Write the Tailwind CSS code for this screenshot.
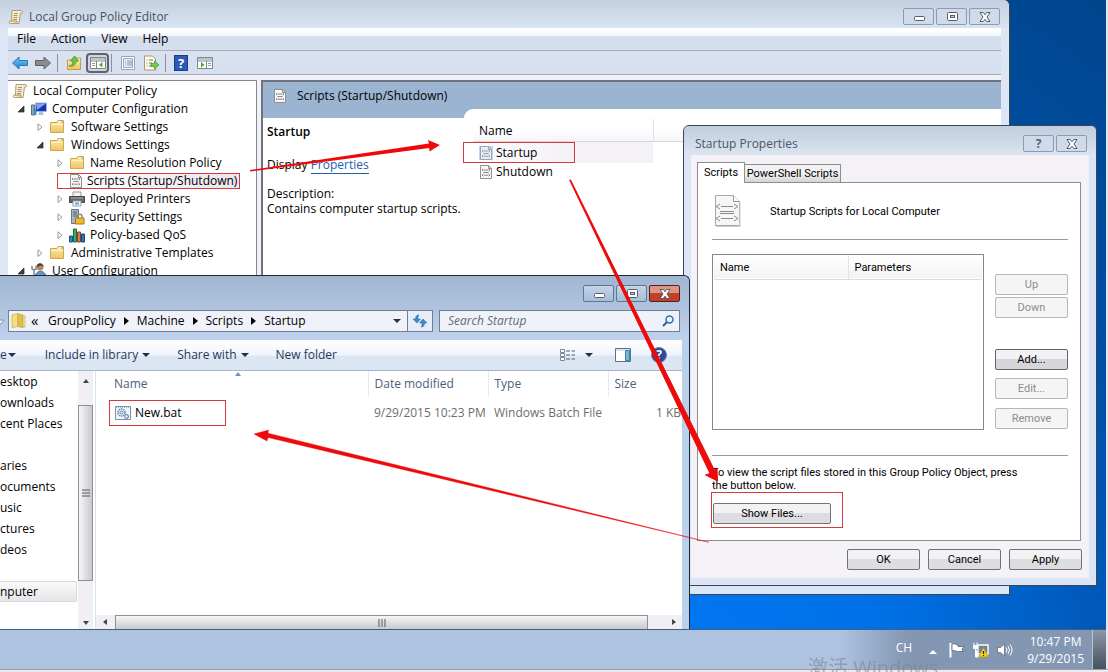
<!DOCTYPE html>
<html lang="en">
<head>
<meta charset="utf-8">
<title>Local Group Policy Editor</title>
<script src="https://cdn.jsdelivr.net/npm/@tailwindcss/browser@4"></script>
</head>
<body class="h-screen overflow-hidden flex flex-col bg-[#e6e6ea] font-['Open_Sans','Noto_Sans',sans-serif] text-[12px] leading-[18px] text-black">

<svg class="absolute w-0 h-0" aria-hidden="true">
  <defs>
    <linearGradient id="gf" x1="0" y1="0" x2="0" y2="1"><stop offset="0" stop-color="#fdebaa"/><stop offset="1" stop-color="#edc566"/></linearGradient>
    <linearGradient id="gb" x1="0" y1="0" x2="0" y2="1"><stop offset="0" stop-color="#7cc8f5"/><stop offset="1" stop-color="#1a80cc"/></linearGradient>
  </defs>
  <symbol id="scroll" viewBox="0 0 16 16">
    <path d="M4 1.500h9.500c1.600 0 1.600 2.500 0 2.500H12.500L11 14.500H2.500C.8 14.500 .8 12 2.500 12H3.500z" fill="#f6ecd2" stroke="#b59a6a"/>
    <path d="M6 4.500h4M5.500 6.500h4M5.500 8.500h4M5 10.500h4" stroke="#a8946c"/><path d="M2.500 12h6.500v2.500" fill="#e2cd9a" stroke="#b59a6a"/>
  </symbol>
  <symbol id="folder" viewBox="0 0 16 16">
    <path d="M1.500 3.500h6.500l1-2h5.500v12h-13z" fill="url(#gf)" stroke="#cfa750"/><path d="M9.500 3h2.500" stroke="#fff"/><path d="M12 3h2" stroke="#6aa7d8"/><path d="M2 5.500h12" stroke="#fff3c8"/>
  </symbol>
  <symbol id="script" viewBox="0 0 14 14">
    <path d="M1.500 .5h8l3 3v10h-11z" fill="#fafafa" stroke="#8f8f8f"/><path d="M9.500 .5v3h3" fill="none" stroke="#8f8f8f"/>
    <path d="M4.500 4L3 5l1.500 1M9.500 4L11 5l-1.500 1M4.500 9L3 10.200l1.500 1M9.500 9l1.500 1.200-1.500 1M5 5h4M4.500 7.500h5M5 10.200h4" fill="none" stroke="#777" stroke-width=".9"/>
  </symbol>
  <symbol id="closed" viewBox="0 0 8 8"><path d="M2 .8L6 4.200 2 7.500z" fill="#fff" stroke="#989898"/></symbol>
  <symbol id="open" viewBox="0 0 8 8"><path d="M7 1v6H1z" fill="#404040" stroke="#222" stroke-width=".7"/></symbol>
  <symbol id="down" viewBox="0 0 8 4"><path d="M0 0h8L4 4z" fill="#1e3250"/></symbol>
  <symbol id="min" viewBox="0 0 12 12"><rect x="1.500" y="5.500" width="10" height="4" rx="1" fill="#fff" stroke="#555c66"/></symbol>
  <symbol id="max" viewBox="0 0 12 12"><rect x="1.500" y="1.500" width="10" height="8" rx="1" fill="#fff" stroke="#555c66"/><rect x="4.500" y="4.500" width="4" height="2" fill="#c8d4e4" stroke="#555c66"/></symbol>
  <symbol id="close" viewBox="0 0 12 12"><path d="M1 1.500h3.200L6 3.800l1.800-2.300H11L8 6l3 4.500H7.800L6 8.200l-1.800 2.300H1L4 6z" fill="#fff" stroke="#555c66"/></symbol>
</svg>

<main class="relative flex-1 min-h-0 overflow-hidden mr-[2px] bg-[radial-gradient(ellipse_at_60%_110%,#0078f4_0%,#0070e6_25%,#0050a8_55%,#004488_90%)]">

  <!-- Policy editor -->
  <section class="absolute left-0 top-0 w-[1010px] h-[595px] flex flex-col rounded-tr-md border-r border-b border-[#3a4656] bg-[#dce6f5] pb-2 pl-2 pr-2">
    <header class="h-7 shrink-0 -mx-2 pl-2 pr-[9px] rounded-tr-md flex items-center bg-linear-to-b from-[#c4d0e0] to-[#dae4f2]">
      <svg class="w-4 h-4 mt-[5px]"><use href="#scroll"/></svg>
      <h1 class="ml-[5px] mt-[5px] flex-1 text-[#46525f]">Local Group Policy Editor</h1>
      <div class="flex gap-[2px] mt-[5px]">
        <button aria-label="Minimize" class="w-[31px] h-[17px] flex items-center justify-center rounded-xs border border-[#8a9cb4] bg-[#cfdbea]"><svg class="w-3 h-3"><use href="#min"/></svg></button>
        <button aria-label="Maximize" class="w-[31px] h-[17px] flex items-center justify-center rounded-xs border border-[#8a9cb4] bg-[#cfdbea]"><svg class="w-3 h-3"><use href="#max"/></svg></button>
        <button aria-label="Close" class="w-[31px] h-[17px] flex items-center justify-center rounded-xs border border-[#8a9cb4] bg-[#cfdbea]"><svg class="w-3 h-3"><use href="#close"/></svg></button>
      </div>
    </header>
    <nav class="h-[23px] shrink-0 flex items-center gap-[15px] pl-[9px] border-b border-[#a9adb8] bg-linear-to-b from-white from-10% via-[#f1f3fa] via-35% to-[#d5deee] to-40%">
      <button>File</button><button>Action</button><button>View</button><button>Help</button>
    </nav>
    <div class="h-[24px] shrink-0 flex items-center pl-1 border-b border-[#a9adb8] bg-linear-to-b from-[#dae2f1] to-[#d6dff0]">
      <button aria-label="Back"><svg class="w-4 h-4" viewBox="0 0 16 16"><path d="M.5 8L7 2v3.500h8.500v5H7V14z" fill="url(#gb)" stroke="#2a7ab8"/></svg></button>
      <button aria-label="Forward" class="ml-[7px]"><svg class="w-4 h-4" viewBox="0 0 16 16"><path d="M15.500 8L9 2v3.500H.5v5H9V14z" fill="#8c8c8c" stroke="#606060"/></svg></button>
      <span class="w-px h-[18px] ml-[6px] bg-[#8a919c]"></span>
      <button aria-label="Up one level" class="ml-2"><svg class="w-4 h-4" viewBox="0 0 16 16"><path d="M1.500 5h6l1-2h6v11.500h-13z" fill="url(#gf)" stroke="#c79c45"/><path d="M3 11c3 0 4-3 4-5H4.500L8.500 1l4 5H10c0 4-3 6-7 5z" fill="#6cc54a" stroke="#3d8b28" stroke-width=".7"/></svg></button>
      <button aria-label="Show console tree" class="ml-1 w-[23px] h-5 flex items-center justify-center rounded-sm border-2 border-[#5b6470] bg-[#d0d5de]"><svg class="w-4 h-4 shrink-0" viewBox="0 0 16 16"><path d="M.5 2.500h15v11H.5z" fill="#fff" stroke="#7d8794"/><path d="M1 4h14M1 6h14M6.500 6v7" stroke="#7d8794"/><path d="M2 8.500h3M2 10.500h3" stroke="#999"/><path d="M12.500 7v5.500L9 9.800z" fill="#3fae2a"/></svg></button>
      <span class="w-px h-[18px] ml-[2px] bg-[#8a919c]"></span>
      <button aria-label="Properties" class="ml-2"><svg class="w-4 h-4" viewBox="0 0 16 16"><path d="M1.500 1.500h13v13h-13z" fill="#fff" stroke="#98a2b0"/><path d="M3.500 3.500h9v9h-9z" fill="#eef3fa" stroke="#8fa5c2"/><path d="M5 6h1M7 6h5M5 8h1M7 8h5M5 10h1M7 10h5" stroke="#7a8ca8"/></svg></button>
      <button aria-label="Export list" class="ml-[7px]"><svg class="w-4 h-4" viewBox="0 0 16 16"><path d="M1.500 1h8l3 3v11h-11z" fill="#fffbe8" stroke="#a59a78"/><path d="M3.500 5h1M6 5h4M3.500 8h1M6 8h3M3.500 11h1M6 11h3" stroke="#777"/><path d="M8 8.500h3.500V6L16 10l-4.500 4v-2.500H8z" fill="#6fd04c" stroke="#3d962a" stroke-width=".7"/></svg></button>
      <span class="w-px h-[18px] ml-[6px] bg-[#8a919c]"></span>
      <button aria-label="Help topics" class="ml-2 w-[14px] h-4 border border-[#1d3c86] bg-[#2c58b8] text-white text-[13px] leading-[14px] font-bold">?</button>
      <button aria-label="Show action pane" class="ml-[9px]"><svg class="w-4 h-4" viewBox="0 0 16 16"><path d="M.5 2.500h15v11H.5z" fill="#fff" stroke="#7d8794"/><path d="M1 4h14M1 6h14M9.500 6v7" stroke="#7d8794"/><path d="M11 8.500h3M11 10.500h3" stroke="#999"/><path d="M4 7v5.500l3.500-2.700z" fill="#3fae2a"/></svg></button>
    </div>
    <div class="flex-1 min-h-0 flex gap-1 pt-[5px] bg-[#f3f1f8]">
      <ul class="w-[249px] shrink-0 overflow-hidden border-t border-r border-[#828790] bg-white pt-px">
        <li class="flex items-center h-[18px] pl-1"><svg class="w-4 h-4 mr-[5px]"><use href="#scroll"/></svg>Local Computer Policy</li>
        <li class="flex items-center h-[18px] pl-[9px]"><svg class="w-2 h-2 mr-[6px]"><use href="#open"/></svg><svg class="w-4 h-4 mr-[5px]" viewBox="0 0 16 16"><path d="M4.500 2h11v8.500h-11z" fill="#1832c0" stroke="#a9b4cc"/><path d="M5 2.500h10L6 9z" fill="#7da4ee"/><path d="M8 11h4l1 3H7z" fill="#b9c2d0"/><path d="M.5 4h3v10h-3z" fill="#98a5b5" stroke="#5c6c80"/><path d="M2.500 8h3v6h-3z" fill="#3b8bc6"/></svg>Computer Configuration</li>
        <li class="flex items-center h-[18px] pl-7"><svg class="w-2 h-2 mr-[5px]"><use href="#closed"/></svg><svg class="w-4 h-4 mr-[6px]"><use href="#folder"/></svg>Software Settings</li>
        <li class="flex items-center h-[18px] pl-7"><svg class="w-2 h-2 mr-[5px]"><use href="#open"/></svg><svg class="w-4 h-4 mr-[6px]"><use href="#folder"/></svg>Windows Settings</li>
        <li class="flex items-center h-[18px] pl-12"><svg class="w-2 h-2 mr-[5px]"><use href="#closed"/></svg><svg class="w-4 h-4 mr-[5px]"><use href="#folder"/></svg>Name Resolution Policy</li>
        <li class="flex items-center h-[18px] ml-[49px] mr-[16px]"><span class="flex items-center w-full h-4 pl-[11px] border border-[#d83a3a] bg-linear-to-r from-white to-[#e9e6ee]"><svg class="w-[14px] h-[14px] shrink-0 mr-1"><use href="#script"/></svg><span class="whitespace-nowrap">Scripts (Startup/Shutdown)</span></span></li>
        <li class="flex items-center h-[18px] pl-12"><svg class="w-2 h-2 mr-[5px]"><use href="#closed"/></svg><svg class="w-4 h-4 mr-[5px]" viewBox="0 0 16 16"><path d="M4 1h8v5H4z" fill="#f4f4f4" stroke="#999"/><path d="M.5 5.500h15v6H.5z" fill="#66686e" stroke="#44464c"/><path d="M2 7h12" stroke="#aaa"/><path d="M4 10h8v5H4z" fill="#fff" stroke="#999"/><path d="M6 12.500h4" stroke="#4ba3e0" stroke-width="2"/></svg>Deployed Printers</li>
        <li class="flex items-center h-[18px] pl-12"><svg class="w-2 h-2 mr-[5px]"><use href="#closed"/></svg><svg class="w-4 h-4 mr-[5px]" viewBox="0 0 16 16"><path d="M2.500 .5h7v14h-7z" fill="#aab6c4" stroke="#6b7785"/><path d="M4 3h4M4 5h4M4 7h4" stroke="#51606f"/><path d="M8.500 9V7.500c0-3 4.500-3 4.500 0V9" fill="none" stroke="#8c8c8c" stroke-width="1.500"/><path d="M6.500 9h8.500v6H6.500z" fill="#f1b92c" stroke="#a87712"/></svg>Security Settings</li>
        <li class="flex items-center h-[18px] pl-12"><svg class="w-2 h-2 mr-[5px]"><use href="#closed"/></svg><svg class="w-4 h-4 mr-[5px]" viewBox="0 0 16 16"><path d="M.5 9h3v6h-3z" fill="#2b88c8" stroke="#14507c"/><path d="M4.500 2h3v13h-3z" fill="#3caa6c" stroke="#1a6e42"/><path d="M8.500 5h3v10h-3z" fill="#d87a4c" stroke="#8d4220"/><path d="M12.500 7h3v8h-3z" fill="#2b78c8" stroke="#14407c"/></svg>Policy-based QoS</li>
        <li class="flex items-center h-[18px] pl-7"><svg class="w-2 h-2 mr-[5px]"><use href="#closed"/></svg><svg class="w-4 h-4 mr-[6px]"><use href="#folder"/></svg>Administrative Templates</li>
        <li class="flex items-center h-[18px] pl-[9px]"><svg class="w-2 h-2 mr-[6px]"><use href="#open"/></svg><svg class="w-4 h-4 mr-[5px]" viewBox="0 0 16 16"><circle cx="9" cy="4" r="3.500" fill="#b98a62"/><path d="M5.500 4c0-5 7-5 7 0l-2-1.500z" fill="#5a4030"/><path d="M4 15c0-9 11-9 11 0z" fill="#6a94c4" stroke="#3e6694"/><path d="M1 3v3l2 1 2-1V3M3 7v8" fill="none" stroke="#7a8898" stroke-width="1.500"/></svg>User Configuration</li>
      </ul>
      <div class="flex-1 flex flex-col border-t-2 border-l-2 border-[#6f747c] bg-white">
        <div class="h-9 shrink-0 flex bg-[#9bb4d1]">
          <h2 class="w-[201px] flex items-center pl-[10px] pb-2"><svg class="w-[14px] h-[14px] mr-[10px]"><use href="#script"/></svg><span class="whitespace-nowrap">Scripts (Startup/Shutdown)</span></h2>
          <span class="flex-1 self-end h-[9px] rounded-tl-[9px] bg-white"></span>
        </div>
        <div class="flex-1 flex pt-px">
          <div class="w-[200px] pl-1 pt-1">
            <h3 class="font-semibold">Startup</h3>
            <p class="mt-[15px]">Display <a href="#" class="text-[#1a5fa8] border-b border-[#1a5fa8]">Properties</a></p>
            <p class="mt-3 leading-[15px] whitespace-nowrap">Description:<br>Contains computer startup scripts.</p>
          </div>
          <div class="flex-1">
            <div class="flex h-[23px] ml-[10px] border-b border-[#d5d5dc] bg-linear-to-b from-white from-50% to-[#f5f4f8]">
              <span class="w-[181px] pl-[6px] pt-[3px] border-r border-[#e0e0e6]">Name</span>
            </div>
            <div class="flex w-[190px] bg-[#f5f2f7]"><button class="w-[112px] h-[21px] flex items-center pl-[15px] border border-[#d83a3a] bg-linear-to-r from-white to-[#f3f0f6]"><svg class="w-[14px] h-[14px] mr-[3px] bg-[#bcd8f4]"><use href="#script" opacity=".7"/></svg>Startup</button></div>
            <button class="flex items-center h-[18px] pl-4"><svg class="w-[14px] h-[14px] mr-[3px]"><use href="#script"/></svg>Shutdown</button>
          </div>
        </div>
      </div>
    </div>
  </section>

  <!-- Startup Properties dialog -->
  <section class="absolute left-[683px] top-[125px] w-[414px] h-[461px] flex flex-col rounded-t-md border border-[#3a4656] bg-[#dbe5f5] px-[7px] pb-[7px] font-['Roboto','Liberation_Sans',sans-serif] text-[11px] leading-[13px]">
    <header class="h-[29px] shrink-0 -mx-[7px] rounded-t-md flex items-center pl-[11px] pr-[9px] bg-linear-to-b from-[#c0cddc] to-[#dbe5f2] font-['Open_Sans',sans-serif] text-[12px]">
      <h2 class="flex-1 mt-[6px] text-[#4b5764]">Startup Properties</h2>
      <div class="flex gap-[2px] mt-[6px]">
        <button aria-label="Help" class="w-[31px] h-[17px] rounded-xs border border-[#8a9cb4] bg-[#cfdbea] font-bold text-[#5a6068] leading-[14px]">?</button>
        <button aria-label="Close" class="w-[31px] h-[17px] flex items-center justify-center rounded-xs border border-[#8a9cb4] bg-[#cfdbea]"><svg class="w-3 h-3"><use href="#close"/></svg></button>
      </div>
    </header>
    <div class="flex-1 flex flex-col bg-[#f5f2f7] pl-[6px] pr-2 pt-[6px] pb-2">
      <div class="flex items-end h-[21px] shrink-0">
        <button class="relative z-10 w-[48px] h-[21px] border border-b-0 border-[#8c8e94] bg-white -mb-px pb-px">Scripts</button>
        <button class="w-[97px] h-[18px] -ml-px border border-b-0 border-[#8c8e94] bg-linear-to-b from-[#f2f2f2] from-50% to-[#d4d4d8] whitespace-nowrap">PowerShell Scripts</button>
      </div>
      <div class="h-[359px] border border-[#8c8e94] bg-white pl-[14px] pr-3">
        <div class="h-[57px] flex items-center border-b border-[#9a9a9a]">
          <svg class="w-[27px] h-8 ml-[2px] mr-[29px]" viewBox="0 0 27 32"><path d="M1.500 .5h18l6 6v24h-24z" fill="#f6f6f6" stroke="#a8a8a8"/><path d="M19.500 .5v6h6" fill="#fff" stroke="#999"/><path d="M2 31.500h24V8" fill="none" stroke="#ccc"/><path d="M6 9l-4 2.500L6 14M20 9l4 2.500-4 2.500M6 21l-4 2.500L6 26M20 21l4 2.500-4 2.500M7 11.500h12M6 16.500h14M6 18.500h14M7 23.500h12" fill="none" stroke="#8a8a8a"/></svg>
          <p>Startup Scripts for Local Computer</p>
        </div>
        <div class="flex h-[216px] pt-[14px] justify-between border-b border-[#9a9a9a]">
          <div class="w-[272px] h-[176px] border border-[#828790] p-px">
            <table class="w-full table-fixed border-collapse"><thead><tr class="h-[23px] bg-linear-to-b from-white to-[#f3f3f5] border-b border-[#dcdce0] text-left"><th class="w-[134px] pl-[6px] font-normal border-r border-[#e2e2e6]">Name</th><th class="pl-[6px] font-normal">Parameters</th></tr></thead><tbody></tbody></table>
          </div>
          <div class="w-[73px] pt-[20px] flex flex-col text-[#8c8c8c]">
            <button disabled class="h-[21px] rounded-xs border border-[#b4b6ba] bg-[#f5f5f5]">Up</button>
            <button disabled class="h-[21px] mt-[2px] rounded-xs border border-[#b4b6ba] bg-[#f5f5f5]">Down</button>
            <button class="h-[21px] mt-[31px] rounded-xs border border-[#5f6266] bg-linear-to-b from-[#f2f1f4] from-50% to-[#d6d5da] to-50% text-black">Add...</button>
            <button disabled class="h-[21px] mt-2 rounded-xs border border-[#b4b6ba] bg-[#f5f5f5]">Edit...</button>
            <button disabled class="h-[21px] mt-[9px] rounded-xs border border-[#b4b6ba] bg-[#f5f5f5]">Remove</button>
          </div>
        </div>
        <p class="mt-[10px] whitespace-nowrap">To view the script files stored in this Group Policy Object, press<br>the button below.</p>
        <div class="w-[132px] h-9 -ml-px border border-[#d83a3a] pt-[10px] pl-px"><button class="block w-[118px] h-[21px] rounded-xs border border-[#707276] bg-linear-to-b from-[#f2f1f4] from-50% to-[#dddce1] to-50%">Show Files...</button></div>
      </div>
      <div class="flex justify-end gap-2 mt-2 -mr-px">
        <button class="w-[73px] h-[21px] rounded-xs border border-[#707276] bg-linear-to-b from-[#f2f1f4] from-50% to-[#dddce1] to-50%">OK</button>
        <button class="w-[73px] h-[21px] rounded-xs border border-[#707276] bg-linear-to-b from-[#f2f1f4] from-50% to-[#dddce1] to-50%">Cancel</button>
        <button class="w-[73px] h-[21px] rounded-xs border border-[#707276] bg-linear-to-b from-[#f2f1f4] from-50% to-[#dddce1] to-50%">Apply</button>
      </div>
    </div>
  </section>

  <!-- Explorer -->
  <section class="absolute left-0 top-[275px] bottom-0 w-[690px] flex flex-col rounded-tr-md border-t border-r border-[#1c2836] bg-[#b9d1ea] pr-[7px]">
    <div class="h-16 shrink-0 -mr-[7px] pr-[9px] rounded-tr-md bg-linear-to-b from-[#a0b6d0] to-[#bed1ed]">
      <div class="flex justify-end gap-[2px] pt-[9px]">
        <button aria-label="Minimize" class="w-[31px] h-[17px] flex items-center justify-center rounded-xs border border-[#5f7591] bg-linear-to-b from-[#c3d4e8] to-[#a7bdd8]"><svg class="w-3 h-3"><use href="#min"/></svg></button>
        <button aria-label="Maximize" class="w-[31px] h-[17px] flex items-center justify-center rounded-xs border border-[#5f7591] bg-linear-to-b from-[#c3d4e8] to-[#a7bdd8]"><svg class="w-3 h-3"><use href="#max"/></svg></button>
        <button aria-label="Close" class="w-[31px] h-[17px] flex items-center justify-center rounded-xs border border-[#5c1c1c] bg-linear-to-b from-[#dc9484] from-50% to-[#c0402a] to-50%"><svg class="w-3 h-3"><use href="#close"/></svg></button>
      </div>
      <div class="flex mt-2 h-[22px]">
        <svg class="w-2 h-4 mt-1" viewBox="0 0 8 16"><path d="M0 6h4L1 10H0" fill="#e8f0fa" stroke="#8098b4"/></svg>
        <div class="flex-1 flex items-center border border-[#6e7f96] bg-[#eff3f9] pl-[2px]">
          <svg class="w-4 h-4" viewBox="0 0 16 16"><path d="M1 2l6-1.500v13L1 14.500z" fill="#f4dd82" stroke="#d8bc60"/><path d="M7 1l5 1v12.500L7 13.500z" fill="#e3bf4c" stroke="#cfae48"/><path d="M12 3h2v11h-2z" fill="#f9edb8" stroke="#c9a640" stroke-width=".7"/></svg>
          <span class="ml-1 w-[17px] text-[15px] pb-[3px]">«</span>
          <button>GroupPolicy</button><svg class="w-[5px] h-2 mx-2" viewBox="0 0 5 8"><path d="M0 0l5 4-5 4z"/></svg>
          <button>Machine</button><svg class="w-[5px] h-2 mx-2" viewBox="0 0 5 8"><path d="M0 0l5 4-5 4z"/></svg>
          <button>Scripts</button><svg class="w-[5px] h-2 mx-2" viewBox="0 0 5 8"><path d="M0 0l5 4-5 4z"/></svg>
          <button>Startup</button>
          <button aria-label="Previous locations" class="ml-auto mr-[6px]"><svg class="w-2 h-1"><use href="#down"/></svg></button>
        </div>
        <button aria-label="Refresh" class="w-[25px] flex items-center justify-center border border-l-0 border-[#6e7f96] bg-[#e6edf7]"><svg class="w-4 h-4" viewBox="0 0 16 16"><path d="M7 2C4 2 3.500 4 3.500 6H1l4 4 3.500-4H6c0-2 0-3 1-4z" fill="#3d8bd0" stroke="#2463a0" stroke-width=".5"/><path d="M9 14c3 0 3.500-2 3.500-4H15l-4-4-3.500 4H10c0 2 0 3-1 4z" fill="#3d8bd0" stroke="#2463a0" stroke-width=".5"/></svg></button>
        <label class="w-[241px] ml-[6px] flex items-center border border-[#6e7f96] bg-[#eff3f9] px-2">
          <input type="text" aria-label="Search" placeholder="Search Startup" class="flex-1 min-w-0 italic outline-none placeholder:text-[#646c76]">
          <svg class="w-3 h-3 -mr-[3px]" viewBox="0 0 12 12"><circle cx="7.500" cy="4.500" r="3.500" fill="#e9f4fe" stroke="#2d6fb8" stroke-width="1.500"/><path d="M5 7L1 11" stroke="#2d5f98" stroke-width="2"/></svg>
        </label>
      </div>
    </div>
    <div class="h-[31px] shrink-0 flex items-center border-b border-[#a6b7cc] bg-linear-to-b from-white from-0% via-[#eff4fb] via-50% to-[#dce6f3] to-55% text-[#1e395b]">
      <button class="flex items-center gap-px">e<svg class="w-2 h-1"><use href="#down"/></svg></button>
      <button class="flex items-center gap-1 ml-[29px]">Include in library<svg class="w-2 h-1"><use href="#down"/></svg></button>
      <button class="flex items-center gap-1 ml-[27px]">Share with<svg class="w-2 h-1"><use href="#down"/></svg></button>
      <button class="ml-[27px]">New folder</button>
      <button aria-label="Change view" class="ml-auto flex items-center gap-[9px]"><svg class="w-4 h-3" viewBox="0 0 16 12"><path d="M.5 .5h4v3h-4zM.5 4.500h4v3h-4zM.5 8.500h4v3h-4z" fill="#fff" stroke="#7b8798"/><path d="M6 2h4M11.500 2H15M6 6h4M11.500 6H15M6 10h4M11.500 10H15" stroke="#4c5f7a"/></svg><svg class="w-2 h-1"><use href="#down"/></svg></button>
      <button aria-label="Preview pane" class="ml-[22px]"><svg class="w-4 h-[14px]" viewBox="0 0 16 14"><path d="M.5 .5h15v13H.5z" fill="#fff" stroke="#5c7089"/><path d="M1 2h14" stroke="#b8c4d4"/><path d="M10.500 2.500h4v10h-4z" fill="#6fb8d8" stroke="#3f82a4"/></svg></button>
      <button aria-label="Get help" class="ml-5 mr-[15px] size-4 rounded-full border border-[#6f7fa8] bg-[#2a4a9c] text-white font-bold leading-[14px]">?</button>
    </div>
    <div class="flex-1 min-h-0 flex bg-white">
      <ul class="w-[78px] shrink-0 leading-[21px] overflow-hidden whitespace-nowrap">
        <li>esktop</li><li>ownloads</li><li>cent Places</li><li class="mt-[21px]">aries</li><li>ocuments</li><li>usic</li><li>ctures</li><li>deos</li><li class="mt-[21px] mr-px h-[21px] leading-[19px] rounded-r-xs border border-l-0 border-[#d9d9dc] bg-linear-to-b from-[#fafafa] to-[#e6e6ea]">nputer</li>
      </ul>
      <div class="w-[15px] flex flex-col items-center bg-[#f1eff3]">
        <svg class="w-[6px] h-1 mt-2 mb-[22px]" viewBox="0 0 6 4"><path d="M0 4h6L3 0z" fill="#444"/></svg>
        <div class="flex items-center justify-center w-full h-[176px] border border-[#8e8f94] bg-linear-to-r from-[#f6f6f8] to-[#c9c9ce]"><svg class="w-2 h-2" viewBox="0 0 8 8"><path d="M0 1h8M0 4h8M0 7h8" stroke="#55555a"/></svg></div>
        <svg class="w-[6px] h-1 mt-auto mb-1" viewBox="0 0 6 4"><path d="M0 0h6L3 4z" fill="#444"/></svg>
      </div>
      <div class="flex-1 min-w-0 flex flex-col ml-[2px] border-l border-[#d5e2f2]">
        <table class="w-full table-fixed border-collapse text-left text-[#6d6d6d]">
          <thead><tr class="h-[26px] text-[#4c607a]"><th class="relative w-[272px] pl-[18px] font-normal border-r border-[#e2eaf4]">Name<svg class="absolute left-[139px] top-px w-[6px] h-[4px]" viewBox="0 0 6 4"><path d="M0 4h6L3 0z" fill="#6d93b8"/></svg></th><th class="w-[120px] pl-[6px] font-normal border-r border-[#e2eaf4]">Date modified</th><th class="w-[120px] pl-[6px] font-normal border-r border-[#e2eaf4]">Type</th><th class="pl-[6px] font-normal">Size</th></tr></thead>
          <tbody><tr class="h-[31px] whitespace-nowrap"><td class="pl-[13px]"><button class="flex items-center w-[117px] h-[26px] pl-[5px] border border-[#d83a3a] text-black"><svg class="w-4 h-4 mr-1" viewBox="0 0 16 16"><path d="M.5 1.500h15v13H.5z" fill="#eef4fa" stroke="#8090a2"/><path d="M1 2.500h14" stroke="#9fb4c8" stroke-dasharray="1 1"/><circle cx="6.500" cy="7.500" r="3.500" fill="none" stroke="#6a8cae" stroke-width="1.500" stroke-dasharray="1.500 .7"/><circle cx="6.500" cy="7.500" r="1.500" fill="none" stroke="#5b86b0"/><circle cx="11.500" cy="11.500" r="2" fill="#cfe0f0" stroke="#5c7fa2"/></svg>New.bat</button></td><td class="pl-[6px]">9/29/2015 10:23 PM</td><td class="pl-[6px]">Windows Batch File</td><td class="text-right pr-px">1 KB</td></tr></tbody>
        </table>
        <div class="mt-auto h-[14px] flex items-center bg-[#f1eff3]">
          <svg class="w-1 h-[6px] ml-[7px] mr-2" viewBox="0 0 4 6"><path d="M4 0v6L0 3z" fill="#444"/></svg>
          <div class="flex-1 h-full flex items-center justify-center border border-b-0 border-[#8e8f94] bg-linear-to-b from-[#f6f6f8] to-[#c9c9ce]"><svg class="w-2 h-2" viewBox="0 0 8 8"><path d="M1 0v8M4 0v8M7 0v8" stroke="#55555a"/></svg></div>
          <svg class="w-1 h-[6px] ml-6 mr-[6px]" viewBox="0 0 4 6"><path d="M0 0v6l4-3z" fill="#444"/></svg>
        </div>
      </div>
    </div>
  </section>

  <!-- Callout arrows -->
  <svg class="absolute left-0 top-0 w-[1106px] h-[629px] pointer-events-none" viewBox="0 0 1106 629" fill="#ee0a0a">
    <path d="M250 170L429 143.500l-1-3.500 12 5-10.500 6.500-.3-3.500L250 171.500z"/>
    <path d="M569.700 180.200L710 473.500l-4.500 1.500L717.500 481l-.5-12.500-2.500 1.800L570.500 179.800z" stroke="#ee0a0a"/>
    <path d="M709 542.300L268 437.500l-1 3.500-13-7 14.500-4-.5 3.200z" stroke="#ee0a0a" stroke-width=".4"/>
  </svg>
</main>

<!-- Taskbar -->
<footer class="relative h-[43px] shrink-0 flex flex-col overflow-hidden">
  <div class="h-10 mr-[2px] flex items-center border-t border-[#41607f] bg-linear-to-r from-[#adc3df] from-76% to-[#8397b3] to-82% text-white">
    <span class="ml-auto mr-[17px] mb-1 leading-[14px]">CH</span>
    <button aria-label="Show hidden icons"><svg class="w-2 h-1 mt-1" viewBox="0 0 8 4"><path d="M0 4h8L4 0z" fill="#fff"/></svg></button>
    <button aria-label="Action Center" class="ml-3"><svg class="w-4 h-4" viewBox="0 0 16 16"><path d="M1.500 1v14.500" stroke="#fff" stroke-width="2"/><path d="M3 2c3-1 4 1 6 1v1.500h6l-2 2.500 1 2.500H9C7 9.500 6 8 3 8.500z" fill="#fff" stroke="#4c5c70" stroke-width=".7"/></svg></button>
    <button aria-label="Network" class="ml-2"><svg class="w-4 h-4" viewBox="0 0 16 16"><path d="M5 3h10v9H5z" fill="#708298" stroke="#fff" stroke-width="1.400"/><path d="M1 .5v3M4 .5v3M.5 3.500h4v3h-4zM2.500 6v9h4" fill="#fff" stroke="#fff"/><path d="M10.500 5.500l5 9.500h-10z" fill="#f8d21c" stroke="#b48c0c" stroke-width=".7"/><path d="M10.500 9v3M10.500 13v1" stroke="#222" stroke-width="1.200"/></svg></button>
    <button aria-label="Volume" class="ml-2"><svg class="w-4 h-4" viewBox="0 0 16 16"><path d="M.5 5.500h3L7.500 2v12l-4-3.500h-3z" fill="#fff" stroke="#53637a" stroke-width=".7"/><path d="M9 5.500q2 2.500 0 5M11 4q3 4 0 8M13 2.500q4 5.500 0 11" fill="none" stroke="#fff"/></svg></button>
    <time class="ml-[14px] mr-2 text-center leading-[17px]">10:47 PM<br>9/29/2015</time>
    <button aria-label="Show desktop" class="w-[14px] h-full border-l border-[#b8c4d4] bg-linear-to-b from-[#8c98a8] to-[#46525f]"></button>
  </div>
  <div class="flex-1 border-t border-[#9c9ca2] bg-[#eceaee]"></div>
  <span class="absolute left-[808px] top-7 text-[20px] leading-[22px] text-[#7c8694]/60 font-['Open_Sans','Noto_Sans_CJK_SC',sans-serif] whitespace-nowrap">激活 Windows</span>
</footer>
</body>
</html>
